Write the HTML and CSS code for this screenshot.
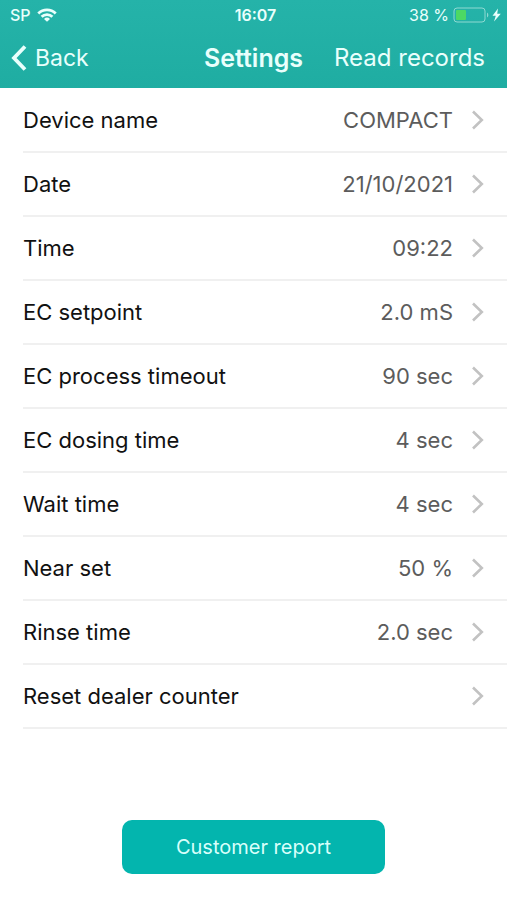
FILE: index.html
```html
<!DOCTYPE html>
<html lang="en">
<head>
<meta charset="utf-8">
<meta name="viewport" content="width=device-width, initial-scale=1">
<title>Settings</title>
<link rel="stylesheet" href="styles.css">
</head>
<body>
<svg class="symbols" aria-hidden="true">
  <symbol id="chevron" viewBox="0 0 12 20"><path d="M1 1.5 9.8 10 1 18.5" fill="none" stroke="currentColor" stroke-width="2.6"/></symbol>
</svg>
<header class="header">
  <div class="status">
    <div class="status-left">
      <span>SP</span>
      <svg class="wifi" viewBox="0 0 20 14" aria-hidden="true">
        <g fill="none" stroke="currentColor" stroke-width="2.8">
          <path d="M1.3 5.4a12.3 12.3 0 0 1 17.4 0"/>
          <path d="M4.6 8.8a7.6 7.6 0 0 1 10.8 0"/>
        </g>
        <path d="M10 13.8 7 10.9a4.3 4.3 0 0 1 6 0z" fill="currentColor"/>
      </svg>
    </div>
    <time class="clock">16:07</time>
    <div class="status-right">
      <span>38 %</span>
      <svg class="battery" viewBox="0 0 48 16" aria-hidden="true">
        <rect x="1" y="1" width="31" height="14" rx="3" fill="none" stroke="#8fd9d2" stroke-width="1"/>
        <rect x="3" y="3" width="10" height="10" rx="1" fill="#4cd964"/>
        <path d="M34 5.5v5c1.8-1 1.8-4 0-5z" fill="#8fd9d2"/>
        <path d="M45 1.5 39.5 8.8h3.3L41 14.5l6.8-7.8h-3.6z" fill="currentColor"/>
      </svg>
    </div>
  </div>
  <nav class="nav">
    <a class="back" href="#">
      <svg class="back-icon" viewBox="0 0 16 26" aria-hidden="true"><path d="M14 1.5 3 13l11 11.5" fill="none" stroke="currentColor" stroke-width="3.8"/></svg>
      <span>Back</span>
    </a>
    <h1 class="title">Settings</h1>
    <a class="action" href="#">Read records</a>
  </nav>
</header>
<main>
  <ul class="list">
    <li><a class="row" href="#"><span class="label">Device name</span><span class="value">COMPACT</span><svg class="chevron" aria-hidden="true"><use href="#chevron"/></svg></a></li>
    <li><a class="row" href="#"><span class="label">Date</span><span class="value">21/10/2021</span><svg class="chevron" aria-hidden="true"><use href="#chevron"/></svg></a></li>
    <li><a class="row" href="#"><span class="label">Time</span><span class="value">09:22</span><svg class="chevron" aria-hidden="true"><use href="#chevron"/></svg></a></li>
    <li><a class="row" href="#"><span class="label">EC setpoint</span><span class="value">2.0 mS</span><svg class="chevron" aria-hidden="true"><use href="#chevron"/></svg></a></li>
    <li><a class="row" href="#"><span class="label">EC process timeout</span><span class="value">90 sec</span><svg class="chevron" aria-hidden="true"><use href="#chevron"/></svg></a></li>
    <li><a class="row" href="#"><span class="label">EC dosing time</span><span class="value">4 sec</span><svg class="chevron" aria-hidden="true"><use href="#chevron"/></svg></a></li>
    <li><a class="row" href="#"><span class="label">Wait time</span><span class="value">4 sec</span><svg class="chevron" aria-hidden="true"><use href="#chevron"/></svg></a></li>
    <li><a class="row" href="#"><span class="label">Near set</span><span class="value">50 %</span><svg class="chevron" aria-hidden="true"><use href="#chevron"/></svg></a></li>
    <li><a class="row" href="#"><span class="label">Rinse time</span><span class="value">2.0 sec</span><svg class="chevron" aria-hidden="true"><use href="#chevron"/></svg></a></li>
    <li><a class="row" href="#"><span class="label">Reset dealer counter</span><svg class="chevron" aria-hidden="true"><use href="#chevron"/></svg></a></li>
  </ul>
</main>
<footer class="footer">
  <button class="report" type="button">Customer report</button>
</footer>
</body>
</html>
```
FILE: styles.css
```css
* {
  box-sizing: border-box;
}

body {
  margin: 0;
  min-height: 100vh;
  display: flex;
  flex-direction: column;
  background: #fff;
  color: #111;
  font-family: Inter, Roboto, sans-serif;
  font-size: 22px;
  line-height: 28px;
}

a {
  color: inherit;
  text-decoration: none;
}

.symbols {
  position: absolute;
  width: 0;
  height: 0;
}

.header {
  background: linear-gradient(#25b3a9, #1fada2);
  color: #e9fffc;
}

.status {
  display: grid;
  grid-template-columns: 1fr auto 1fr;
  align-items: center;
  height: 30px;
  padding: 0 6px 0 10px;
  font-size: 16px;
  line-height: 20px;
}

.status-left,
.status-right {
  display: flex;
  align-items: center;
  gap: 6px;
}

.status-left {
  font-weight: 500;
}

.status-right {
  justify-content: flex-end;
  gap: 4px;
}

.wifi {
  width: 20px;
  height: 14px;
}

.battery {
  width: 48px;
  height: 16px;
}

.clock {
  font-weight: 600;
}

.nav {
  display: grid;
  grid-template-columns: 1fr auto 1fr;
  align-items: center;
  height: 58px;
  padding: 0 11px 2px;
  font-size: 24px;
}

.back {
  display: flex;
  align-items: center;
  gap: 8px;
  font-size: 23px;
}

.back-icon {
  width: 16px;
  height: 26px;
}

.title {
  margin: 0;
  font-size: 25px;
  font-weight: 600;
}

.action {
  justify-self: end;
  padding-right: 11px;
  white-space: nowrap;
}

.list {
  margin: 0;
  padding: 1px 0 0 23px;
  list-style: none;
}

.row {
  display: flex;
  align-items: center;
  height: 64px;
  padding-right: 23px;
  border-bottom: 2px solid #f0f0f0;
}

.label {
  flex: 1;
}

.value {
  color: #5c5c5c;
}

.chevron {
  width: 12px;
  height: 20px;
  margin-left: 19px;
  color: #c2c2c2;
}

.footer {
  display: flex;
  justify-content: center;
  margin-top: auto;
  padding-bottom: 26px;
}

.report {
  width: 52%;
  height: 54px;
  border: 0;
  border-radius: 10px;
  background: #03b5ae;
  color: #d8fffb;
  font-family: inherit;
  font-size: 20px;
}
```
